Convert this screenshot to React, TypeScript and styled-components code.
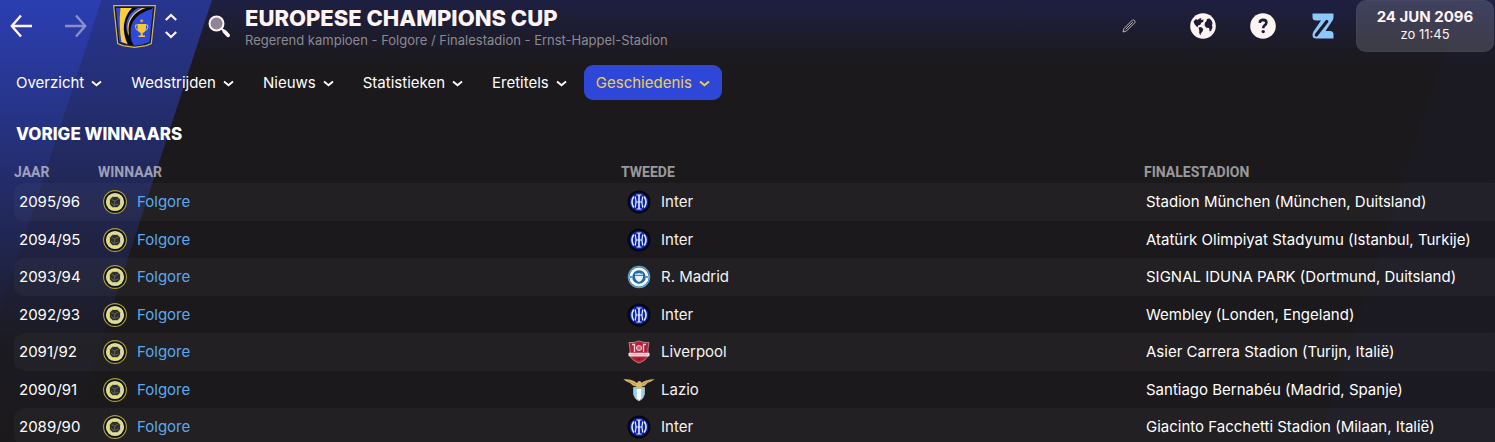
import React from 'react';
import styled, { createGlobalStyle, css } from 'styled-components';

const GlobalStyle = createGlobalStyle`
  *, *::before, *::after { box-sizing: border-box; }
  body { margin: 0; background: #1b191b; }
  button { border: 0; padding: 0; margin: 0; background: none; color: inherit; font: inherit; cursor: pointer; }
  svg { display: block; flex: none; }
`;

const Screen = styled.div`
  height: 100vh;
  overflow: hidden;
  color: #ffffff;
  font-family: Inter, 'Liberation Sans', sans-serif;
  font-size: 15px;
  background:
    linear-gradient(288deg, rgba(30, 32, 80, 0.16) 167px, rgba(30, 32, 80, 0) 168px),
    linear-gradient(180deg, rgba(27, 25, 27, 0) 0, rgba(27, 25, 27, 0.25) 100px, rgba(27, 25, 27, 0.93) 340px, #1b191b 430px),
    linear-gradient(108deg, #2b3eb2 96px, #27358f 97px, #27358f 201px, rgba(39, 53, 143, 0) 202px),
    linear-gradient(180deg, #1e2043 0, #1b191d 64px, #1b191b 70px);
`;

const Header = styled.header`
  display: flex;
  align-items: center;
  height: 52px;
  padding: 0 1px 0 10px;
`;

const History = styled.div`
  display: flex;
  gap: 33px;
  margin-right: 26px;
`;

const IconButton = styled.button<{ $dim?: boolean }>`
  display: flex;
  align-items: center;
  justify-content: center;
  width: 22px;
  height: 26px;
  color: #fff4f4;
  opacity: ${(p) => (p.$dim ? 0.45 : 1)};
`;

const Stepper = styled.div`
  display: flex;
  flex-direction: column;
  gap: 10px;
  margin: 0 31px 0 9px;
`;

const StepButton = styled.button`
  width: 12px;
  height: 8px;
  color: #fff4f4;
`;

const Heading = styled.div`
  flex: 1;
  min-width: 0;
  margin-left: 15px;
  padding-top: 4px;
  white-space: nowrap;
`;

const Title = styled.h1`
  margin: 0;
  font-size: 22px;
  line-height: 24px;
  font-weight: 800;
  color: #fff4f4;
`;

const Subtitle = styled.p`
  margin: 0;
  font-size: 13px;
  line-height: 20px;
  color: #8b8a92;
`;

const Tools = styled.div`
  display: flex;
  align-items: center;
  margin-right: 3px;
`;

const ToolButton = styled(IconButton)<{ $apart?: boolean }>`
  width: 60px;
  height: 40px;
  margin-right: ${(p) => (p.$apart ? '14px' : '0')};
`;

const DateButton = styled.button`
  display: flex;
  flex-direction: column;
  align-items: center;
  justify-content: center;
  width: 138px;
  height: 52px;
  padding-bottom: 2px;
  border-radius: 10px;
  background: rgba(255, 255, 255, 0.15);
  box-shadow: inset 0 0 0 1px rgba(255, 255, 255, 0.03);
  color: #fff4f4;
`;

const Day = styled.strong`
  font-size: 15px;
  line-height: 18px;
  font-weight: 700;
`;

const Time = styled.span`
  font-size: 13px;
  line-height: 16px;
`;

const Nav = styled.nav`
  display: flex;
  gap: 5px;
  padding: 13px 4px 0;
`;

const Tab = styled.button<{ $active?: boolean }>`
  display: flex;
  align-items: center;
  gap: 7px;
  height: 35px;
  padding: 0 12px;
  border-radius: 9px;
  font-size: 15px;
  white-space: nowrap;
  ${(p) =>
    p.$active &&
    css`
      background: #2f47d9;
      color: #f0cf4d;
    `}
`;

const Panel = styled.main`
  padding: 22px 0 0 14px;
`;

const PanelTitle = styled.h2`
  margin: 0 0 14px 2px;
  font-size: 17px;
  line-height: 24px;
  font-weight: 800;
`;

const Table = styled.table`
  width: 100%;
  table-layout: fixed;
  border-collapse: separate;
  border-spacing: 0;
`;

const Column = styled.col<{ $width?: number }>`
  width: ${(p) => (p.$width ? `${p.$width}px` : 'auto')};
`;

const HeadCell = styled.th`
  height: 23px;
  padding: 2px 0 0;
  text-align: left;
  font-family: Roboto, 'Liberation Sans', sans-serif;
  font-size: 14px;
  line-height: 21px;
  font-weight: 700;
  color: rgba(255, 255, 255, 0.56);
`;

const Cell = styled.td<{ $pad: number }>`
  padding: 0 0 0 ${(p) => p.$pad}px;
  white-space: nowrap;
`;

const Row = styled.tr`
  height: 37px;
  &:nth-child(odd) {
    height: 38px;
  }
  &:nth-child(odd) > td {
    padding-bottom: 1px;
    background: rgba(255, 255, 255, 0.03);
  }
  > td:first-child { border-radius: 10px 0 0 10px; }
`;

const Club = styled.div`
  display: flex;
  align-items: center;
  gap: 6px;
`;

const ClubLink = styled.a<{ $won?: boolean }>`
  color: ${(p) => (p.$won ? '#5aa9ee' : '#f4f2f2')};
  text-decoration: none;
`;

const Arrow = ({ flip }: { flip?: boolean }) => (
  <svg width="22" height="24" viewBox="0 0 22 24" fill="none" stroke="currentColor" strokeWidth="2.400">
    <path d={flip ? 'M20.500 12H0M11 1.500L20.200 12L11 22.500' : 'M1.500 12H22M11 1.500L1.800 12L11 22.500'} />
  </svg>
);

const StepChevron = ({ up }: { up?: boolean }) => (
  <svg width="12" height="8" viewBox="0 0 12 8" fill="none" stroke="currentColor" strokeWidth="2.200">
    <path d={up ? 'M0.800 7L6 2L11.200 7' : 'M0.800 1L6 6L11.200 1'} />
  </svg>
);

const TabChevron = () => (
  <svg width="11" height="8" viewBox="0 0 11 8" fill="none" stroke="currentColor" strokeWidth="1.800">
    <path d="M1 2.500L5.500 6.300L10 2.500" />
  </svg>
);

const CupCrest = () => (
  <svg width="43" height="43" viewBox="0 0 43 43">
    <path d="M0.700 0.700H42.300L38.300 38.500L33 40.600L21.500 42.400L10 40.600L4.700 38.500Z" fill="#181a2c" stroke="#d8b94c" strokeWidth="1.200" />
    <path d="M3 3H40L36.500 37L29 39.500L21.500 40.800L14 39.500L6.500 37Z" fill="#2f4ad8" />
    <path d="M7.500 3H20C12 12 9.500 24 14.500 39L8.500 37Q5.500 20 7.500 3Z" fill="#fbcf3c" />
    <path d="M19 3H28C15 12 13 27 21 40.500L15 39.500C8 26 10 12 19 3Z" fill="#07080f" />
    <path d="M24.500 3H30C17 11 13 20 15.500 31C10.500 20 14 9 24.500 3Z" fill="#3b53d6" />
    <path d="M29 3H38C23 7 14.500 17 16 31C11.500 19 18 8 29 3Z" fill="#fbcf3c" />
    <path d="M33 3H39V4C24 8 14 18 19 35C10.500 21 19 7 33 3Z" fill="#07080f" />
    <circle cx="28.700" cy="15.800" r="1.500" fill="#d3a83e" />
    <path d="M24.500 19H33V23Q33 27 29.700 28V30.500H32V32H25.500V30.500H27.800V28Q24.500 27 24.500 23Z" fill="#f6c93c" />
    <path d="M24.500 20H22.600V22.500Q23 25 25.200 25.500M33 20H34.700V22.500Q34.400 25 32.200 25.500" fill="none" stroke="#f6c93c" strokeWidth="1" />
  </svg>
);

const SearchIcon = () => (
  <svg width="22" height="23" viewBox="0 0 22 23" fill="none">
    <circle cx="8.500" cy="8.500" r="7" fill="#8e8695" stroke="#fff4f4" strokeWidth="2" />
    <path d="M13.500 13.500L16 16" stroke="#fff4f4" strokeWidth="2" />
    <path d="M16.500 16.500L20 20.300" stroke="#fff4f4" strokeWidth="3.800" strokeLinecap="round" />
  </svg>
);

const PencilIcon = () => (
  <svg width="14" height="14" viewBox="0 0 14 14" fill="none" stroke="#b9b6b8" strokeWidth="1" strokeLinejoin="round">
    <path d="M1 13L2 9.500L10.300 1.200Q11.400 0.400 12.500 1.500Q13.600 2.600 12.800 3.700L4.500 12L1 13ZM3.700 10.300L10.700 3.300" />
  </svg>
);

const GlobeIcon = () => (
  <svg width="26" height="26" viewBox="0 0 26 26">
    <circle cx="13" cy="13" r="12.800" fill="#fff4f4" />
    <g fill="#1d1c31">
      <path d="M3.500 8.500L6 6L7.500 7L9.500 5.500L11.500 5L10.800 7L13.500 6.500L13.200 9L11.500 9.500L10 12L8.200 12.200L7.800 14.200L6 13L4.500 11Z" />
      <path d="M8.500 14.500L11 14L13.300 16L12.500 18.500L11 20.200L10.300 22.200L9.200 20L9.300 17.500Z" />
      <path d="M16.500 8L17 6L19.500 5.500L21.500 7.500L22.500 10L22 12.500L22.500 14.500L21 18L19.800 18.500L19 15L16.500 14.800L14.500 12.500L15 9.500Z" />
    </g>
  </svg>
);

const HelpIcon = () => (
  <svg width="26" height="26" viewBox="0 0 26 26" fill="none">
    <circle cx="13" cy="13" r="12.800" fill="#fff4f4" />
    <path d="M9.700 9.800Q10 6.900 13.200 6.900Q16.400 7 16.400 9.600Q16.400 11.200 14.600 12.400Q13.200 13.300 13.200 15.300" stroke="#1d1c31" strokeWidth="2.600" />
    <circle cx="13.200" cy="18.600" r="1.700" fill="#1d1c31" />
  </svg>
);

const ZIcon = () => (
  <svg width="22" height="26" viewBox="0 0 22 26">
    <path d="M0.500 0.500H21.500V4.500Q21.500 6 20.500 7.500L13.500 18H18Q21.500 18 21.500 21.500V25.500H4Q0.500 25.500 0.500 22Q0.500 20 1.500 18.500L9 7.500H4Q0.500 7.500 0.500 4Z" fill="#8cc8fb" />
    <path d="M14.800 8.500L4.300 22" fill="none" stroke="#1c1b2d" strokeWidth="3.200" strokeLinecap="round" />
  </svg>
);

const FolgoreBadge = () => (
  <svg width="32" height="24" viewBox="0 0 32 24" fill="none">
    <circle cx="16" cy="12" r="11.400" fill="#111112" stroke="#a8a033" strokeWidth="1.100" />
    <circle cx="16" cy="12" r="8.200" stroke="#dedccb" strokeWidth="1.800" />
    <circle cx="16" cy="12" r="6.800" stroke="#ece45c" strokeWidth="1.800" />
    <circle cx="16" cy="12" r="5.600" stroke="#d6d6c8" strokeWidth="1" />
    <circle cx="16" cy="12" r="5.200" fill="#2e2f2c" />
    <path d="M12.500 9.500L16 11L19.500 8.800M16 11L15 15.500M12 13L15 15.500L19.500 14" stroke="#6b6c63" strokeWidth="0.800" />
  </svg>
);

const InterBadge = () => (
  <svg width="32" height="24" viewBox="0 0 32 24" fill="none">
    <circle cx="16" cy="12" r="11.500" fill="#05060f" />
    <circle cx="16" cy="12" r="9.300" fill="#0a24a8" />
    <g stroke="#e4e9fa" strokeWidth="1.600">
      <path d="M10.800 6.500Q7.200 12 10.800 17.500M21.200 6.500Q24.800 12 21.200 17.500M16 5V19" />
      <path d="M12.300 6.500Q13.800 12 12.300 17.500M19.700 6.500Q18.200 12 19.700 17.500" strokeWidth="1.200" />
      <path d="M13.500 5H18.500M13.500 19H18.500M13 12H19" strokeWidth="1" />
    </g>
  </svg>
);

const MadridBadge = () => (
  <svg width="32" height="24" viewBox="0 0 32 24" fill="none">
    <circle cx="16" cy="12" r="10.600" fill="#1f69a6" stroke="#5da1cf" strokeWidth="1.300" />
    <circle cx="16" cy="12" r="8.200" stroke="#f8fbfb" strokeWidth="2.800" />
    <path d="M12 8.500Q14 9 16 8Q18 9 20 8.500V12Q19.500 15.500 16 17Q12.500 15.500 12 12Z" fill="#e8f1f5" />
    <path d="M12 10.300H20" stroke="#1f69a6" strokeWidth="1" />
    <circle cx="8" cy="12" r="0.900" fill="#1f69a6" />
    <circle cx="24" cy="12" r="0.900" fill="#1f69a6" />
  </svg>
);

const LiverpoolBadge = () => (
  <svg width="32" height="24" viewBox="0 0 32 24" fill="none">
    <path d="M6 2.500Q11 3 16 1Q21 3 26 2.500L25 9V15Q24 20 16 23Q8 20 7 15V9Z" fill="#b51d38" stroke="#d9a5ac" strokeWidth="0.700" />
    <path d="M9 4.500H11.500V12M23 4.500H20.500V12" stroke="#f1d7da" strokeWidth="1.300" />
    <circle cx="16" cy="8" r="2.500" fill="#cf5b6c" stroke="#f3dadd" strokeWidth="1" />
    <rect x="5.500" y="12.800" width="21" height="3.600" rx="0.800" fill="#f6dcdc" />
    <path d="M7 14.700H25" stroke="#e0a0a8" strokeWidth="0.800" />
    <path d="M13 18.500H19L16 20.500Z" fill="#8f1229" />
  </svg>
);

const LazioBadge = () => (
  <svg width="32" height="24" viewBox="0 0 32 24">
    <path d="M10.500 9.500H21.500V16Q20.500 21 16 23Q11.500 21 10.500 16Z" fill="#8fd0ee" stroke="#b8bcc0" strokeWidth="0.800" />
    <path d="M13.800 11H18.200V20.500L16 22L13.800 20.500Z" fill="#ffffff" />
    <path d="M0.300 1.300Q9 0.500 14 5L15.500 3L17.500 3.200L18.500 4.800Q24 1 31.700 1.300L28 3.500L24.500 5L22 7.500L18 9L20 10.500H12L14 9L9.500 7.300L7 5L3.500 3.500Z" fill="#d8b968" />
    <path d="M5 2.800L13 6.500M27 2.800L19 6.500" stroke="#a88b4a" strokeWidth="0.700" />
  </svg>
);

const badges = {
  Inter: InterBadge,
  'R. Madrid': MadridBadge,
  Liverpool: LiverpoolBadge,
  Lazio: LazioBadge,
};

const tabs = ['Overzicht', 'Wedstrijden', 'Nieuws', 'Statistieken', 'Eretitels', 'Geschiedenis'];

const finals: { year: string; second: keyof typeof badges; venue: string }[] = [
  { year: '2095/96', second: 'Inter', venue: 'Stadion München (München, Duitsland)' },
  { year: '2094/95', second: 'Inter', venue: 'Atatürk Olimpiyat Stadyumu (Istanbul, Turkije)' },
  { year: '2093/94', second: 'R. Madrid', venue: 'SIGNAL IDUNA PARK (Dortmund, Duitsland)' },
  { year: '2092/93', second: 'Inter', venue: 'Wembley (Londen, Engeland)' },
  { year: '2091/92', second: 'Liverpool', venue: 'Asier Carrera Stadion (Turijn, Italië)' },
  { year: '2090/91', second: 'Lazio', venue: 'Santiago Bernabéu (Madrid, Spanje)' },
  { year: '2089/90', second: 'Inter', venue: 'Giacinto Facchetti Stadion (Milaan, Italië)' },
];

export default function App() {
  return (
    <Screen>
      <GlobalStyle />
      <Header>
        <History>
          <IconButton aria-label="Terug"><Arrow /></IconButton>
          <IconButton aria-label="Vooruit" $dim><Arrow flip /></IconButton>
        </History>
        <CupCrest />
        <Stepper>
          <StepButton aria-label="Vorige"><StepChevron up /></StepButton>
          <StepButton aria-label="Volgende"><StepChevron /></StepButton>
        </Stepper>
        <IconButton aria-label="Zoeken"><SearchIcon /></IconButton>
        <Heading>
          <Title>EUROPESE CHAMPIONS CUP</Title>
          <Subtitle>Regerend kampioen - Folgore / Finalestadion - Ernst-Happel-Stadion</Subtitle>
        </Heading>
        <Tools>
          <ToolButton aria-label="Bewerken" $apart><PencilIcon /></ToolButton>
          <ToolButton aria-label="Wereld"><GlobeIcon /></ToolButton>
          <ToolButton aria-label="Help"><HelpIcon /></ToolButton>
          <ToolButton aria-label="Menu"><ZIcon /></ToolButton>
        </Tools>
        <DateButton>
          <Day>24 JUN 2096</Day>
          <Time>zo 11:45</Time>
        </DateButton>
      </Header>
      <Nav>
        {tabs.map((tab) => (
          <Tab key={tab} $active={tab === 'Geschiedenis'}>
            {tab}
            <TabChevron />
          </Tab>
        ))}
      </Nav>
      <Panel>
        <PanelTitle>VORIGE WINNAARS</PanelTitle>
        <Table>
          <colgroup>
            <Column $width={84} />
            <Column />
            <Column />
            <Column $width={351} />
          </colgroup>
          <thead>
            <tr>
              <HeadCell scope="col">JAAR</HeadCell>
              <HeadCell scope="col">WINNAAR</HeadCell>
              <HeadCell scope="col">TWEEDE</HeadCell>
              <HeadCell scope="col">FINALESTADION</HeadCell>
            </tr>
          </thead>
          <tbody>
            {finals.map(({ year, second, venue }) => {
              const Badge = badges[second];
              return (
                <Row key={year}>
                  <Cell $pad={5}>{year}</Cell>
                  <Cell $pad={1}>
                    <Club>
                      <FolgoreBadge />
                      <ClubLink href="#folgore" $won>Folgore</ClubLink>
                    </Club>
                  </Cell>
                  <Cell $pad={2}>
                    <Club>
                      <Badge />
                      <ClubLink href={`#${second}`}>{second}</ClubLink>
                    </Club>
                  </Cell>
                  <Cell $pad={2}>{venue}</Cell>
                </Row>
              );
            })}
          </tbody>
        </Table>
      </Panel>
    </Screen>
  );
}
